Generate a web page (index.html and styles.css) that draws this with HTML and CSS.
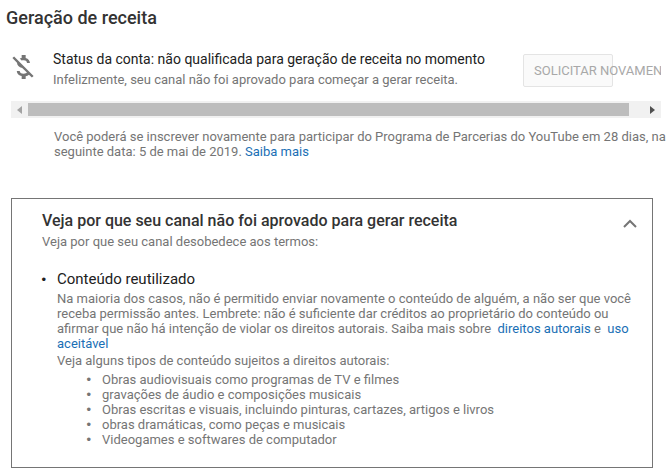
FILE: index.html
```html
<!DOCTYPE html>
<html lang="pt-BR">
<head>
<meta charset="utf-8">
<title>Geração de receita</title>
<link rel="stylesheet" href="styles.css">
</head>
<body>
<main class="page">
  <h1 class="title">Geração de receita</h1>
  <section class="status">
    <svg class="status-icon" viewBox="0 0 24 24" width="32" height="32" aria-hidden="true"><path fill="#757575" d="M12.5 6.9c1.78 0 2.44.85 2.5 2.1h2.21c-.07-1.72-1.12-3.3-3.21-3.81V3h-3v2.16c-.53.12-1.03.3-1.48.54l1.47 1.47c.41-.17.91-.27 1.51-.27zM5.33 4.06L4.06 5.33 7.5 8.77c0 2.08 1.56 3.21 3.91 3.91l3.51 3.51c-.34.48-1.05.91-2.42.91-2.06 0-2.87-.92-2.98-2.1h-2.2c.12 2.19 1.76 3.42 3.68 3.83V21h3v-2.15c.96-.18 1.82-.55 2.45-1.12l2.22 2.22 1.27-1.27L5.33 4.06z"/></svg>
    <div class="status-text">
      <p class="status-head">Status da conta: não qualificada para geração de receita no momento</p>
      <p class="status-sub">Infelizmente, seu canal não foi aprovado para começar a gerar receita.</p>
    </div>
    <button class="request" type="button" disabled>SOLICITAR NOVAMENTE</button>
  </section>
  <div class="scrollbar">
    <span class="arrow arrow-left"></span>
    <span class="thumb"></span>
    <span class="arrow arrow-right"></span>
  </div>
  <p class="note">Você poderá se inscrever novamente para participar do Programa de Parcerias do YouTube em 28 dias, na<br>seguinte data: 5 de mai de 2019. <a href="#">Saiba mais</a></p>
  <section class="card">
    <div class="card-head">
      <h2 class="card-title">Veja por que seu canal não foi aprovado para gerar receita</h2>
      <svg class="chevron" viewBox="0 0 14 9" width="14" height="9" aria-hidden="true"><path fill="none" stroke="#757575" stroke-width="2" d="M1 8l6-6 6 6"/></svg>
    </div>
    <p class="card-sub">Veja por que seu canal desobedece aos termos:</p>
    <ul class="reasons">
      <li>
        <h3 class="reason-title">Conteúdo reutilizado</h3>
        <p class="reason-text">Na maioria dos casos, não é permitido enviar novamente o conteúdo de alguém, a não ser que você receba permissão antes. Lembrete: não é suficiente dar créditos ao proprietário do conteúdo ou afirmar que não há intenção de violar os direitos autorais. Saiba mais sobre &nbsp;<a href="#">direitos autorais</a> e &nbsp;<a href="#">uso aceitável</a></p>
        <p class="reason-intro">Veja alguns tipos de conteúdo sujeitos a direitos autorais:</p>
        <ul class="types">
          <li>Obras audiovisuais como programas de TV e filmes</li>
          <li>gravações de áudio e composições musicais</li>
          <li>Obras escritas e visuais, incluindo pinturas, cartazes, artigos e livros</li>
          <li>obras dramáticas, como peças e musicais</li>
          <li>Videogames e softwares de computador</li>
        </ul>
      </li>
    </ul>
  </section>
</main>
</body>
</html>
```
FILE: styles.css
```css
html, body {
  margin: 0;
  padding: 0;
  background: #fff;
  overflow: hidden;
}
body {
  width: 666px;
  height: 471px;
  font-family: Roboto, "Liberation Sans", sans-serif;
  color: #757575;
  font-size: 13px;
  line-height: 15px;
}
a { color: #1a6fb5; text-decoration: none; }
p, h1, h2, h3, ul { margin: 0; padding: 0; }
.page { width: 666px; }
.title {
  padding: 8px 0 0 6px;
  font-size: 18px;
  line-height: 20px;
  font-weight: 500;
  color: #333;
}
.status {
  display: flex;
  width: 650px;
  height: 50px;
  margin: 23px 0 0 11px;
  overflow: hidden;
}
.status-icon { flex: none; margin: 0 0 0 -4px; }
.status-text { flex: none; width: 470px; margin-left: 14px; }
.status-head { font-size: 14px; line-height: 16px; color: #212121; }
.status-sub { margin-top: 5px; line-height: 15px; }
.request {
  flex: none;
  box-sizing: border-box;
  width: 90px;
  height: 33px;
  margin: 3px 0 0;
  padding: 0 0 0 10px;
  border: 1px solid #e4e4e4;
  border-radius: 2px;
  background: #fafafa;
  color: #a8a8a8;
  font: 400 13px/31px Roboto, sans-serif;
  text-align: left;
  white-space: nowrap;
  overflow: visible;
}
.scrollbar {
  display: flex;
  align-items: center;
  width: 650px;
  height: 17px;
  margin-left: 11px;
  background: #f1f1f1;
}
.thumb { width: 601px; height: 13px; background: #bdbdbd; }
.arrow { flex: none; width: 0; height: 0; border-style: solid; border-color: transparent; }
.arrow-left { margin: 0 6px 0 6px; border-width: 4px 5px 4px 0; border-right-color: #a3a3a3; }
.arrow-right { margin-left: 21px; border-width: 4px 0 4px 5px; border-left-color: #505050; }
.note { margin: 11px 0 0 54px; width: 620px; white-space: nowrap; }
.card {
  box-sizing: border-box;
  width: 642px;
  height: 270px;
  margin: 39px 0 0 11px;
  padding: 12px 30px 0 30px;
  border: 1px solid #757575;
}
.card-head { display: flex; justify-content: space-between; align-items: center; }
.card-title { font-size: 16px; line-height: 20px; font-weight: 500; color: #333; }
.chevron { margin: 4px -15px 0 0; }
.card-sub { margin-top: 3px; }
.reasons { margin-top: 20px; padding-left: 15px; color: #212121; list-style-type: "•\00a0\00a0\00a0"; }
.reason-title { font-size: 15px; line-height: 20px; font-weight: 400; color: #212121; }
.reason-text { margin-top: 2px; width: 580px; color: #757575; }
.reason-intro { margin-top: 2px; color: #757575; }
.types { margin-top: 4px; padding-left: 45px; color: #757575; list-style-type: "•\00a0\00a0\00a0"; }
.reasons li::marker { font-family: "Liberation Sans", sans-serif; }
```
